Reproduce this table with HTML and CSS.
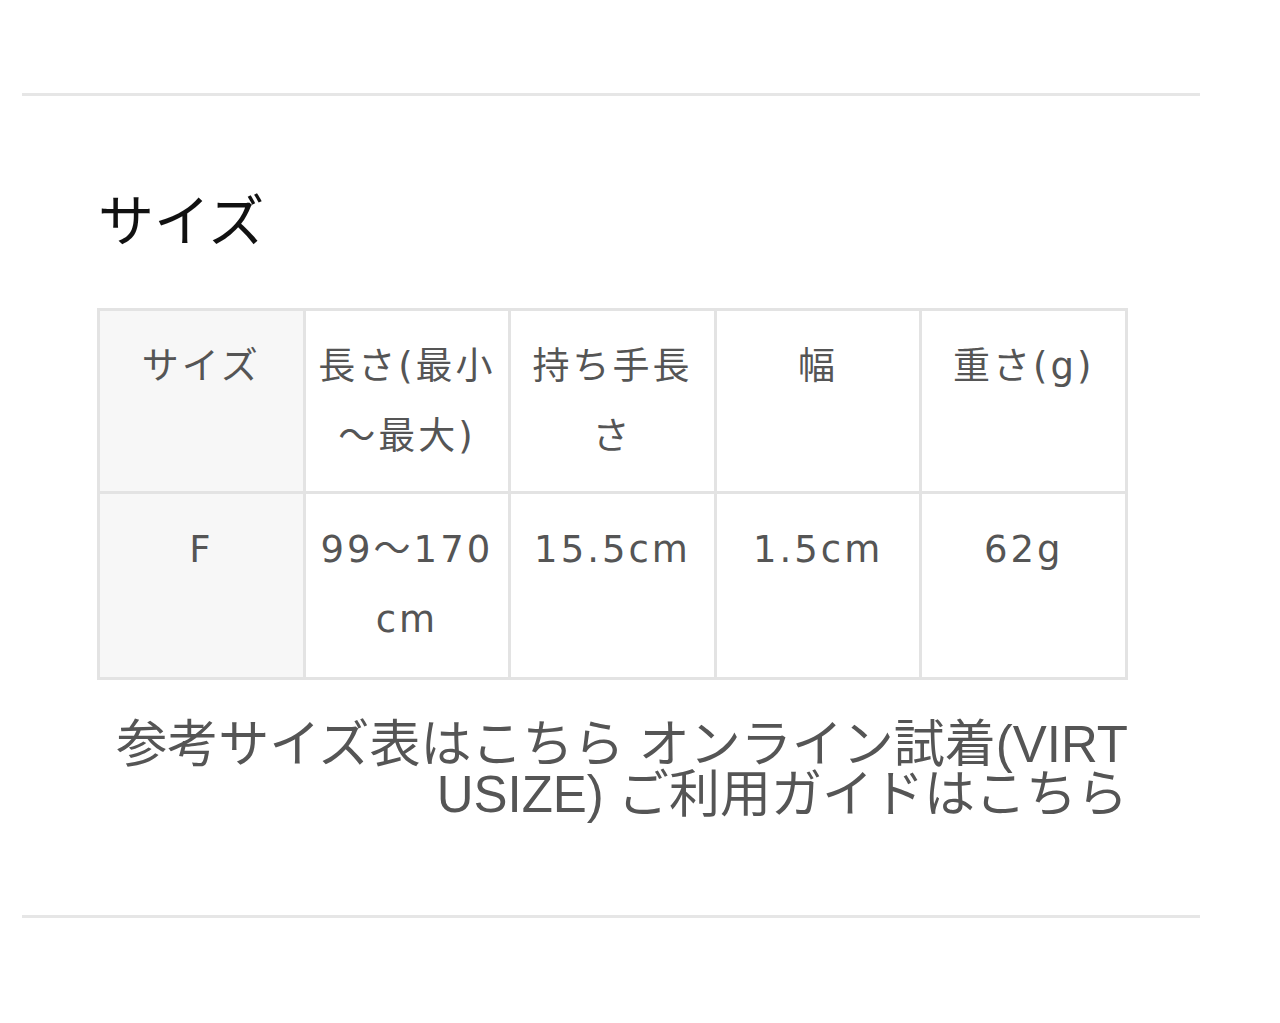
FILE: index.html
```html
<!DOCTYPE html>
<html lang="ja">
<head>
<meta charset="utf-8">
<title>サイズ</title>
<link rel="stylesheet" href="styles.css">
</head>
<body>
<section class="size-section">
  <div class="inner">
    <h2 class="title">サイズ</h2>
    <table class="size-table">
      <tr>
        <th class="first">サイズ</th>
        <th>長さ(最小～最大)</th>
        <th>持ち手長さ</th>
        <th>幅</th>
        <th>重さ(g)</th>
      </tr>
      <tr>
        <td class="first">F</td>
        <td>99～170cm</td>
        <td>15.5cm</td>
        <td>1.5cm</td>
        <td>62g</td>
      </tr>
    </table>
    <p class="links">参考サイズ表はこちら オンライン試着(VIRTUSIZE) ご利用ガイドはこちら</p>
  </div>
</section>
</body>
</html>
```

FILE: styles.css
```css
html, body {
  margin: 0;
  padding: 0;
  background: #ffffff;
}

body {
  font-family: "Noto Sans CJK JP", "Noto Sans", sans-serif;
}

.size-section {
  margin: 93px 0 0 22px;
  width: 1178px;
  border-top: 3px solid #e6e6e6;
  border-bottom: 3px solid #e6e6e6;
}

.inner {
  padding: 0 0 95px 75px;
  width: 1031px;
}

.title {
  margin: 93px 0 0 1px;
  font-size: 56px;
  line-height: 56px;
  font-weight: 400;
  color: #111111;
}

.size-table {
  margin-top: 63px;
  width: 1031px;
  border-collapse: collapse;
  table-layout: fixed;
  border: 3px solid #e3e3e3;
}

.size-table th,
.size-table td {
  width: 20%;
  border: 3px solid #e3e3e3;
  padding: 21px 8px 19px;
  font-family: "DejaVu Sans", "Noto Sans CJK JP", sans-serif;
  font-size: 37px;
  line-height: 70px;
  letter-spacing: 3px;
  font-weight: 400;
  color: #555555;
  text-align: center;
  vertical-align: top;
  word-break: break-all;
}

.size-table td {
  padding-top: 21px;
  padding-bottom: 22px;
}

.size-table .first {
  background: #f7f7f7;
}

.links {
  margin: 40px 0 0;
  font-family: "Liberation Sans", "Noto Sans CJK JP", sans-serif;
  font-size: 51px;
  line-height: 50px;
  color: #555555;
  text-align: right;
  word-break: break-all;
}
```
